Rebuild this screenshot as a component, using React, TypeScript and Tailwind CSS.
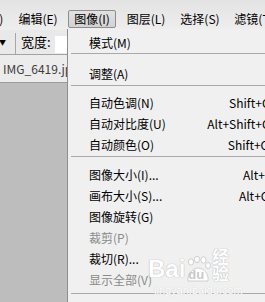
import React from "react";

type Item =
  | { kind: "item"; label: string; shortcut?: string; disabled?: boolean }
  | { kind: "sep"; cls: string };

const menuBar = ["文件(F)", "编辑(E)", "图像(I)", "图层(L)", "选择(S)", "滤镜(T)", "分析(A)"];

const items: Item[] = [
  { kind: "item", label: "模式(M)" },
  { kind: "sep", cls: "mt-0 mb-[9px]" },
  { kind: "item", label: "调整(A)" },
  { kind: "sep", cls: "mt-[1px] mb-[6px]" },
  { kind: "item", label: "自动色调(N)", shortcut: "Shift+Ctrl+L" },
  { kind: "item", label: "自动对比度(U)", shortcut: "Alt+Shift+Ctrl+L" },
  { kind: "item", label: "自动颜色(O)", shortcut: "Shift+Ctrl+B" },
  { kind: "sep", cls: "mt-[1px] mb-[7px]" },
  { kind: "item", label: "图像大小(I)...", shortcut: "Alt+Ctrl+I" },
  { kind: "item", label: "画布大小(S)...", shortcut: "Alt+Ctrl+C" },
  { kind: "item", label: "图像旋转(G)" },
  { kind: "item", label: "裁剪(P)", disabled: true },
  { kind: "item", label: "裁切(R)..." },
  { kind: "item", label: "显示全部(V)", disabled: true },
  { kind: "sep", cls: "mt-[3px] mb-[6px]" },
];

const font = "font-['Noto_Sans_CJK_SC',sans-serif]";

// faint "Bai du 经验" watermark in the lower right of the menu
const Watermark = () => (
  <div className="absolute left-[80px] top-[218px] w-[96px] pointer-events-none select-none">
    <div className="flex items-end">
      <span className="font-['Liberation_Sans',sans-serif] font-bold text-[24px] leading-none text-white [text-shadow:0_0_1px_#b8b8b8,0_0_1px_#b8b8b8]">
        Bai
      </span>
      <div className="relative w-[26px] h-[26px] -mb-[1px]">
        <svg width="26" height="26" viewBox="0 0 26 26" className="absolute inset-0">
          <g fill="#ffffff" stroke="#c4c4c4" strokeWidth="0.8">
            <ellipse cx="6" cy="6" rx="2.6" ry="3.2" />
            <ellipse cx="12" cy="3.5" rx="2.6" ry="3.2" />
            <ellipse cx="18.5" cy="4" rx="2.6" ry="3.2" />
            <ellipse cx="23" cy="9.5" rx="2.4" ry="3" />
            <path d="M3 25 C2 19 7 12 13 12 C19 12 24 18 23 25 Z" />
          </g>
        </svg>
        <span className="absolute left-[3px] bottom-[1px] font-['Liberation_Sans',sans-serif] font-bold text-[13px] leading-none text-[#c9c9c9]">
          du
        </span>
      </div>
      <span className={`${font} font-bold text-[17px] leading-none ml-[2px] text-white [text-shadow:0_0_1px_#b8b8b8,0_0_1px_#b8b8b8]`}>
        经验
      </span>
    </div>
    <div className="mt-[4px] ml-[6px] font-['Liberation_Sans',sans-serif] text-[11px] leading-none text-white [text-shadow:0_0_1px_#c0c0c0]">
      jingyan.baidu.com
    </div>
  </div>
);

export default function App() {
  return (
    <div className={`relative w-[265px] h-[302px] overflow-hidden bg-[#bdbdbd] ${font} text-[12px] text-black`}>
      {/* menu bar */}
      <div className="h-[30px] bg-gradient-to-b from-[#e3e3e3] to-[#eeeeee] flex items-end pb-[2px] -ml-[40px] gap-[6px]">
        {menuBar.map((m) => (
          <div
            key={m}
            className={
              m === "图像(I)"
                ? "w-[48px] h-[18px] shrink-0 flex items-center justify-center rounded-[2px] border border-[#8e8e8e] bg-gradient-to-b from-[#e2e2e2] to-[#d2d2d2]"
                : "w-[48px] h-[18px] shrink-0 flex items-center justify-center"
            }
          >
            {m}
          </div>
        ))}
      </div>

      {/* options bar */}
      <div className="h-[25px] bg-[#e9e9e9] border-b border-[#a3a3a3] flex items-center">
        <span className="text-[7px] leading-none ml-[-1px] w-[16px]">▼</span>
        <div className="w-px h-[21px] bg-[#a6a6a6] self-end" />
        <span className="ml-[5px] text-[13px]">宽度:</span>
        <div className="ml-[4px] w-[40px] h-[17px] bg-white self-end mb-[1px]" />
      </div>

      {/* document tab */}
      <div className="h-[28px] bg-[#ececec] border-b border-[#9c9c9c] flex items-center pl-[3px] text-[#3c3c3c]">
        IMG_6419.jpg
      </div>

      {/* image menu */}
      <div className="absolute left-[67px] top-[29px] w-[250px] h-[290px] bg-[#f0f0f0] border-l border-[#8f8f8f] pt-[3px]">
        {items.map((it, i) =>
          it.kind === "sep" ? (
            <div key={i} className={`ml-[3px] h-px bg-[#a9a9a9] ${it.cls}`} />
          ) : (
            <div
              key={i}
              className={`h-[21px] flex items-center pl-[21px] pr-[22px] ${it.disabled ? "text-[#8a8a8a]" : "text-black"}`}
            >
              <span className="flex-1 whitespace-nowrap">{it.label}</span>
              {it.shortcut && <span className="whitespace-nowrap">{it.shortcut}</span>}
            </div>
          ),
        )}
        <Watermark />
      </div>
    </div>
  );
}
